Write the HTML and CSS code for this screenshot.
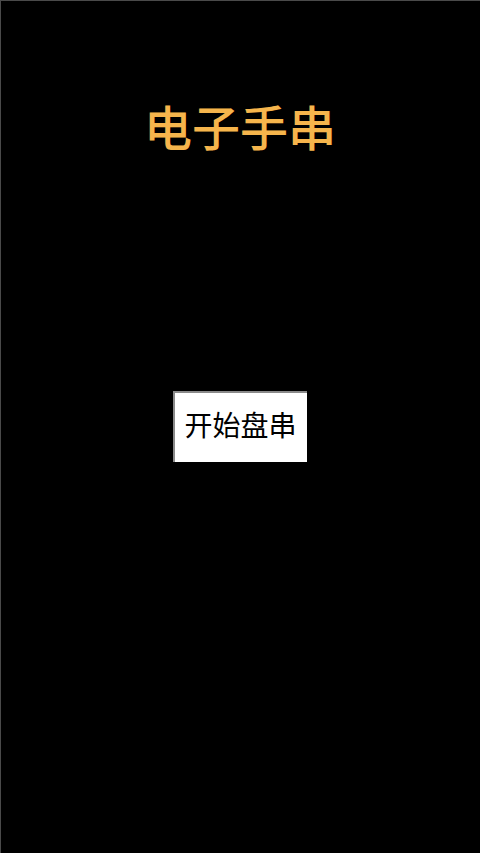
FILE: index.html
```html
<!DOCTYPE html>
<html lang="zh">
<head>
<meta charset="utf-8">
<link rel="stylesheet" href="styles.css">
</head>
<body>
<div class="screen">
  <h1 class="title">电子手串</h1>
  <button class="start">开始盘串</button>
</div>
</body>
</html>
```
FILE: styles.css
```css
html, body {
  margin: 0;
  padding: 0;
  background: #000;
}
.screen {
  box-sizing: border-box;
  width: 480px;
  height: 853px;
  border-top: 1px solid #4a4a4a;
  border-left: 1px solid #4a4a4a;
  display: flex;
  flex-direction: column;
  align-items: center;
  font-family: "Noto Sans CJK SC", "Noto Sans", sans-serif;
}
.title {
  margin: 90px 0 0 -1px;
  font-size: 48px;
  line-height: 68px;
  font-weight: 500;
  color: #f6b54c;
  letter-spacing: 0;
}
.start {
  box-sizing: border-box;
  margin: 232px 0 0 -2px;
  width: 134px;
  height: 71px;
  background: #fff;
  border: none;
  border-top: 2px solid #8a8a8a;
  border-left: 2px solid #8a8a8a;
  font-family: "Noto Sans CJK SC", "Noto Sans", sans-serif;
  font-size: 28px;
  color: #000;
  padding: 0 0 7px 0;
}
```
